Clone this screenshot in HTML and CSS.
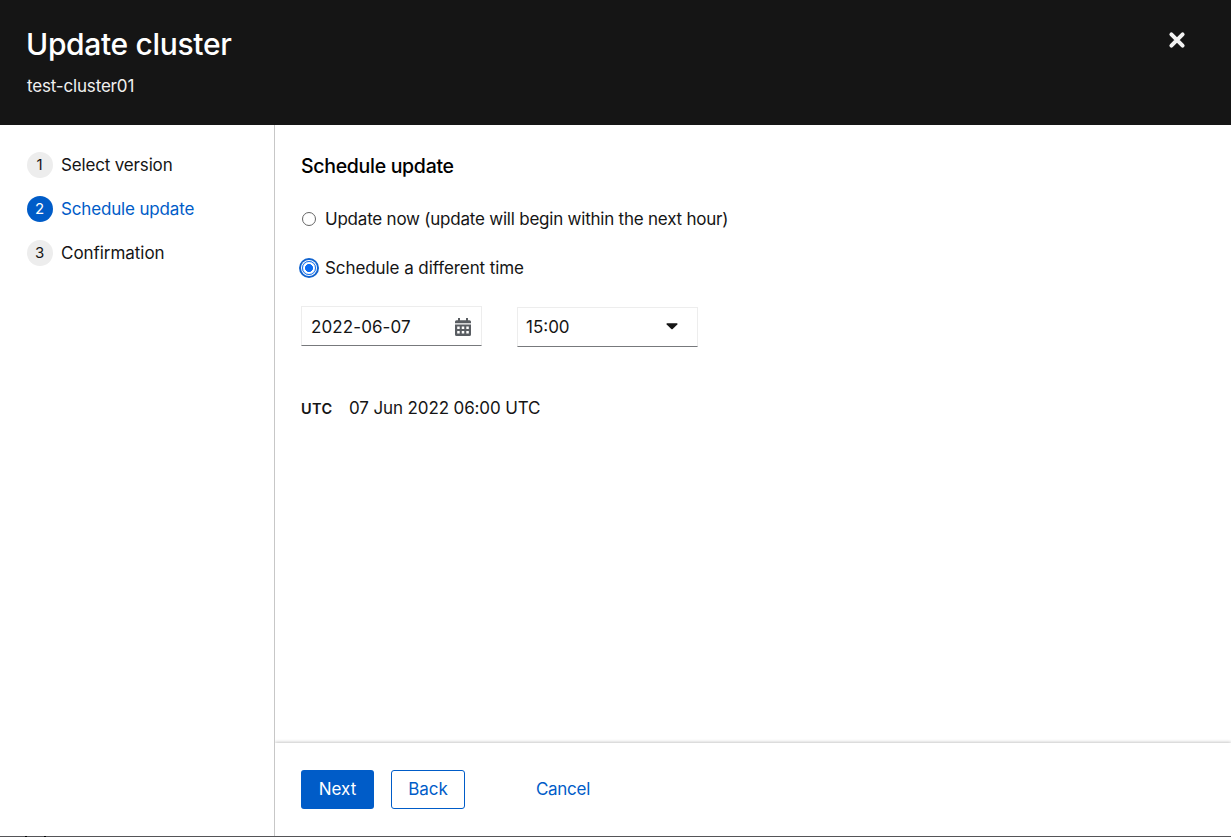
FILE: index.html
```html
<!DOCTYPE html>
<html lang="en">
<head>
<meta charset="utf-8">
<title>Update cluster</title>
<link rel="stylesheet" href="styles.css">
</head>
<body>
<div class="wizard">
  <header class="header">
    <div>
      <h1 class="title"><span>Update cluster</span></h1>
      <p class="subtitle"><span>test-cluster01</span></p>
    </div>
    <button class="close" aria-label="Close">
      <svg width="18" height="18" viewBox="0 0 18 18"><path d="M3.4 3.4 14.6 14.6M14.6 3.4 3.4 14.6" fill="none" stroke="#f2f2f2" stroke-width="4" stroke-linecap="round"/></svg>
    </button>
  </header>
  <div class="body">
    <nav class="nav">
      <a class="step"><span class="num">1</span><span class="t-select">Select version</span></a>
      <a class="step current"><span class="num">2</span><span class="t-schedule">Schedule update</span></a>
      <a class="step"><span class="num">3</span><span class="t-confirm">Confirmation</span></a>
    </nav>
    <div class="content">
      <main class="main">
        <h2 class="heading"><span>Schedule update</span></h2>
        <div class="option"><span class="radio"></span><span class="t-now">Update now (update will begin within the next hour)</span></div>
        <div class="option second"><span class="radio checked"></span><span class="t-different">Schedule a different time</span></div>
        <div class="fields">
          <div class="field date"><span class="t-date">2022-06-07</span>
            <svg width="16" height="18" viewBox="0 0 16 18" fill="#595d62"><path d="M3 0h2v2.300h6V0h2v2.300h1.500Q16 2.300 16 3.800V5.200H0V3.800Q0 2.300 1.500 2.300H3Z"/><path fill-rule="evenodd" d="M0 6.400H16V16.500Q16 18 14.500 18H1.500Q0 18 0 16.500ZM2.200 8.500V11H4.700V8.500ZM6.750 8.500V11H9.250V8.500ZM11.300 8.500V11H13.800V8.500ZM2.200 13V15.500H4.700V13ZM6.750 13V15.500H9.250V13ZM11.300 13V15.500H13.800V13Z"/></svg>
          </div>
          <div class="field time"><span class="t-time">15:00</span>
            <svg width="12" height="7" viewBox="0 0 12 7"><path d="M1 .3H11Q12 .5 11.300 1.400L6.700 6Q6 6.600 5.300 6L.7 1.400Q0 .5 1 .3Z" fill="#151515"/></svg>
          </div>
        </div>
        <div class="utc"><b class="t-utc">UTC</b><span class="t-stamp">07 Jun 2022 06:00 UTC</span></div>
      </main>
      <footer class="footer">
        <button class="btn primary"><span class="t-next">Next</span></button>
        <button class="btn secondary"><span class="t-back">Back</span></button>
        <button class="btn link"><span class="t-cancel">Cancel</span></button>
      </footer>
    </div>
  </div>
</div>
</body>
</html>
```
FILE: styles.css
```css
* { box-sizing: border-box; }
body { margin: 0; font: 17px/26px Inter, "Liberation Sans", sans-serif; color: #151515; background: #fff; }
h1, h2, p { margin: 0; }
button { font: inherit; border: 0; padding: 0; background: none; }
.wizard { height: 837px; display: flex; flex-direction: column; border-bottom: 1px solid #555558; border-image: linear-gradient(90deg, #555558 26px, #000 26px 28px, #555558 28px 45px, #000 45px 47px, #555558 47px) 1; white-space: nowrap; overflow: hidden; }
.header { height: 125px; flex: none; background: #151515; color: #fff; display: flex; justify-content: space-between; padding: 26px 45px 0 27px; }
.title { font-size: 30px; line-height: 36px; font-weight: 500; letter-spacing: -.33px; margin-left: -1px; }
.subtitle { margin-top: 11px; color: #f0f0f0; letter-spacing: -.17px; }
.close { width: 18px; height: 18px; margin-top: 5px; }
.close svg { display: block; }
.body { flex: 1; display: flex; min-height: 0; }
.nav { width: 275px; flex: none; border-right: 1px solid #c7c7c7; padding: 27px 0 0 27px; display: flex; flex-direction: column; gap: 18px; letter-spacing: -.16px; }
.step { display: flex; align-items: center; gap: 8px; height: 26px; }
.num { width: 26px; height: 26px; border-radius: 50%; background: #ededed; font-size: 15px; text-align: center; padding-right: 1px; }
.current { color: #005cc8; }
.current .num { background: #005cc8; color: #fff; }
.t-confirm { letter-spacing: -.04px; }
.content { flex: 1; display: flex; flex-direction: column; }
.main { flex: 1; padding: 28px 26px 0; }
.heading { font-size: 19.5px; line-height: 26px; font-weight: 500; color: #000; letter-spacing: -.3px; }
.option { display: flex; align-items: center; margin-top: 27px; height: 26px; gap: 9px; padding-left: 1px; }
.option.second { margin-top: 23px; }
.t-now { letter-spacing: -.22px; }
.t-different { letter-spacing: -.08px; }
.radio { width: 14px; height: 14px; border: 1px solid #666; border-radius: 50%; }
.checked { border: 1.5px solid #0b6bf2; background: radial-gradient(circle, #0b6bf2 0 3.7px, #fff 4.3px); box-shadow: 0 0 0 1px #fff, 0 0 0 3px #1264cf; }
.fields { display: flex; gap: 35px; margin-top: 25px; }
.field { width: 181px; height: 40px; border: 1px solid #ededed; border-bottom-color: #77797c; display: flex; align-items: center; justify-content: space-between; padding: 0 10px 0 9px; }
.field.date { padding-top: 2px; letter-spacing: .1px; }
.field.time { margin-top: 1px; padding: 0 19px 0 8px; }
.time svg { margin-top: -1px; }
.field svg { flex: none; }
.utc { display: flex; align-items: flex-start; margin-top: 48px; }
.utc b { font-size: 14.5px; font-weight: 600; width: 48px; letter-spacing: .4px; padding-top: 1px; }
.t-stamp { letter-spacing: -.12px; }
.footer { height: 93px; padding: 27px 26px; display: flex; box-shadow: 0 -1px 3px rgba(0,0,0,.22); clip-path: inset(-5px 0 0 0); }
.btn { height: 39px; border-radius: 3px; padding-bottom: 2px; }
.primary { width: 73px; background: #005cc8; color: #fff; }
.secondary { width: 74px; margin-left: 17px; border: 1px solid #005cc8; color: #005cc8; }
.link { margin-left: 71px; color: #005cc8; letter-spacing: -.3px; }
```
